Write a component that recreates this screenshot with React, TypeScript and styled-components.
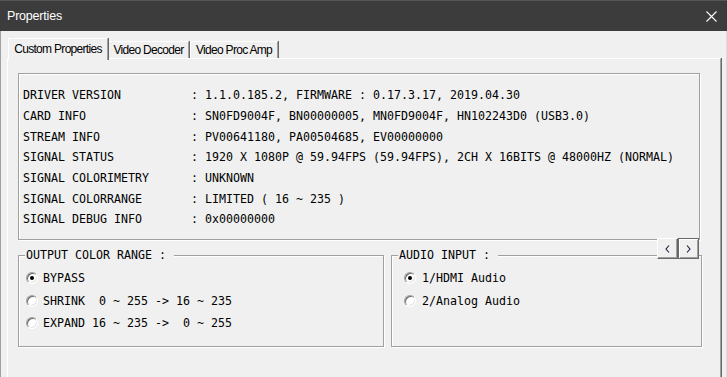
import React from 'react';
import styled, { createGlobalStyle } from 'styled-components';

const GlobalStyle = createGlobalStyle`
    html, body {
        margin: 0;
        padding: 0;
        background: #f0f0f0;
        overflow: hidden;
    }
`;

const MONO = `'DejaVu Sans Mono', 'Liberation Mono', monospace`;
const UI = `'Liberation Sans', Arial, sans-serif`;

const INFO: [string, string][] = [
    ['DRIVER VERSION', '1.1.0.185.2, FIRMWARE : 0.17.3.17, 2019.04.30'],
    ['CARD INFO', 'SN0FD9004F, BN00000005, MN0FD9004F, HN102243D0 (USB3.0)'],
    ['STREAM INFO', 'PV00641180, PA00504685, EV00000000'],
    ['SIGNAL STATUS', '1920 X 1080P @ 59.94FPS (59.94FPS), 2CH X 16BITS @ 48000HZ (NORMAL)'],
    ['SIGNAL COLORIMETRY', 'UNKNOWN'],
    ['SIGNAL COLORRANGE', 'LIMITED ( 16 ~ 235 )'],
    ['SIGNAL DEBUG INFO', '0x00000000'],
];

const TABS = [
    { label: 'Custom Properties', width: 100 },
    { label: 'Video Decoder', width: 81 },
    { label: 'Video Proc Amp', width: 88 },
];

const Window = styled.div`
    width: 727px;
    height: 377px;
    box-sizing: border-box;
    display: flex;
    flex-direction: column;
    background: #f0f0f0;
    overflow: hidden;
`;

const TitleBar = styled.div`
    height: 31px;
    flex: none;
    display: flex;
    align-items: center;
    justify-content: space-between;
    padding: 0 10px 0 7px;
    background: #3c3c3c;
    border-top: 1px solid #555;
    box-sizing: border-box;
`;

const Title = styled.span`
    font-family: ${UI};
    font-size: 12.5px;
    color: #fff;
    letter-spacing: -0.2px;
`;

const CloseIcon = styled.svg`
    width: 11px;
    height: 11px;
    display: block;
`;

const Body = styled.div`
    flex: 1;
    display: flex;
    flex-direction: column;
    padding: 7px 5px 0 6px;
    border-left: 1px solid #a0a0a0;
    border-right: 1px solid #dcdcdc;
`;

const TabStrip = styled.div`
    display: flex;
    align-items: flex-end;
    height: 20px;
    padding-left: 1px;
`;

const Tab = styled.div<{ $active?: boolean; $width: number }>`
    position: relative;
    z-index: ${p => (p.$active ? 2 : 1)};
    width: ${p => p.$width}px;
    height: ${p => (p.$active ? 22 : 17)}px;
    margin-bottom: ${p => (p.$active ? -2 : 0)}px;
    margin-right: ${p => (p.$active ? 0 : 1)}px;
    box-sizing: border-box;
    display: flex;
    align-items: ${p => (p.$active ? 'flex-start' : 'center')};
    justify-content: center;
    padding-top: ${p => (p.$active ? 3 : 0)}px;
    background: #f0f0f0;
    border-top: 1px solid #fff;
    border-left: 1px solid #fff;
    border-right: 1px solid #a0a0a0;
    box-shadow: 1px 0 0 #696969;
    font-family: ${UI};
    font-size: 12px;
    letter-spacing: -0.7px;
    color: #000;
    white-space: nowrap;
`;

const TabPage = styled.div`
    position: relative;
    width: 714px;
    height: 330px;
    box-sizing: border-box;
    border-top: 1px solid #fff;
    border-left: 1px solid #fff;
    border-right: 1px solid #a0a0a0;
    box-shadow: 1px 0 0 #696969;
    padding: 14px 0 0 10px;
    display: flex;
    flex-direction: column;
    gap: 15px;
`;

const Etched = styled.div`
    box-sizing: border-box;
    border: 1px solid #a0a0a0;
    box-shadow: 1px 1px 0 #fff, inset 1px 1px 0 #fff;
`;

const InfoBox = styled(Etched)`
    width: 682px;
    height: 167px;
    padding: 11px 0 0 4px;
    display: flex;
    flex-direction: column;
`;

const InfoRow = styled.div`
    display: flex;
    height: 20.67px;
    align-items: center;
    font-family: ${MONO};
    font-size: 11.63px;
    color: #000;
    white-space: pre;
`;

const InfoLabel = styled.span`
    width: 24ch;
    flex: none;
`;

const GroupRow = styled.div`
    display: flex;
    gap: 7px;
`;

const GroupBox = styled(Etched)<{ $width: number; $indent: number }>`
    position: relative;
    width: ${p => p.$width}px;
    height: 92px;
    padding: 11px 0 0 ${p => p.$indent}px;
    display: flex;
    flex-direction: column;
`;

const GroupTitle = styled.span`
    position: absolute;
    top: -8px;
    left: 6px;
    padding: 0 1px;
    background: #f0f0f0;
    font-family: ${MONO};
    font-size: 11.63px;
    line-height: 15px;
    color: #000;
    white-space: pre;
`;

const RadioRow = styled.label<{ $gap: number }>`
    display: flex;
    align-items: center;
    gap: ${p => p.$gap}px;
    height: 22.5px;
    font-family: ${MONO};
    font-size: 11.63px;
    color: #000;
    white-space: pre;
`;

const RadioDot = styled.span<{ $checked?: boolean }>`
    position: relative;
    width: 12px;
    height: 12px;
    flex: none;
    box-sizing: border-box;
    border-radius: 50%;
    background: #fff;
    border: 1px solid;
    border-color: #a0a0a0 #fff #fff #a0a0a0;
    box-shadow: inset 1px 1px 0 #696969, inset -1px -1px 0 #e3e3e3;

    &::after {
        content: '';
        display: ${p => (p.$checked ? 'block' : 'none')};
        position: absolute;
        left: 3px;
        top: 3px;
        width: 4px;
        height: 4px;
        border-radius: 50%;
        background: #000;
    }
`;

const ScrollArrows = styled.div`
    position: absolute;
    left: 649px;
    top: 179px;
    display: flex;
    z-index: 3;
`;

const ArrowButton = styled.div<{ $focused?: boolean }>`
    width: 21px;
    height: 21px;
    box-sizing: border-box;
    display: flex;
    align-items: center;
    justify-content: center;
    background: #f0f0f0;
    border: 1px solid;
    border-color: ${p => (p.$focused ? '#696969' : '#fff #696969 #696969 #fff')};
    box-shadow: ${p =>
        p.$focused
            ? 'inset 1px 1px 0 #fff, inset -1px -1px 0 #a0a0a0'
            : 'inset -1px -1px 0 #a0a0a0'};
`;

const Chevron = ({ dir }: { dir: 'left' | 'right' }) => (
    <svg width="5" height="8" viewBox="0 0 5 8">
        <polyline
            points={dir === 'left' ? '4,0.5 1,4 4,7.5' : '1,0.5 4,4 1,7.5'}
            fill="none"
            stroke="#1a1a40"
            strokeWidth="1.1"
        />
    </svg>
);

const Radio = ({ checked, label, gap }: { checked?: boolean; label: string; gap: number }) => (
    <RadioRow $gap={gap}>
        <RadioDot $checked={checked} />
        {label}
    </RadioRow>
);

export default function App() {
    return (
        <Window>
            <GlobalStyle />
            <TitleBar>
                <Title>Properties</Title>
                <CloseIcon viewBox="0 0 11 11">
                    <path d="M0.5 0.5 L10.5 10.5 M10.5 0.5 L0.5 10.5" stroke="#fff" strokeWidth="1.1" />
                </CloseIcon>
            </TitleBar>
            <Body>
                <TabStrip>
                    {TABS.map((t, i) => (
                        <Tab key={t.label} $active={i === 0} $width={t.width}>
                            {t.label}
                        </Tab>
                    ))}
                </TabStrip>
                <TabPage>
                    <InfoBox>
                        {INFO.map(([k, v]) => (
                            <InfoRow key={k}>
                                <InfoLabel>{k}</InfoLabel>
                                {': ' + v}
                            </InfoRow>
                        ))}
                    </InfoBox>
                    <GroupRow>
                        <GroupBox $width={366} $indent={7}>
                            <GroupTitle>{'OUTPUT COLOR RANGE : '}</GroupTitle>
                            <Radio checked gap={5} label="BYPASS" />
                            <Radio gap={5} label="SHRINK  0 ~ 255 -> 16 ~ 235" />
                            <Radio gap={5} label="EXPAND 16 ~ 235 ->  0 ~ 255" />
                        </GroupBox>
                        <GroupBox $width={311} $indent={12}>
                            <GroupTitle>{'AUDIO INPUT : '}</GroupTitle>
                            <Radio checked gap={6} label="1/HDMI Audio" />
                            <Radio gap={6} label="2/Analog Audio" />
                        </GroupBox>
                    </GroupRow>
                    <ScrollArrows>
                        <ArrowButton>
                            <Chevron dir="left" />
                        </ArrowButton>
                        <ArrowButton $focused>
                            <Chevron dir="right" />
                        </ArrowButton>
                    </ScrollArrows>
                </TabPage>
            </Body>
        </Window>
    );
}
